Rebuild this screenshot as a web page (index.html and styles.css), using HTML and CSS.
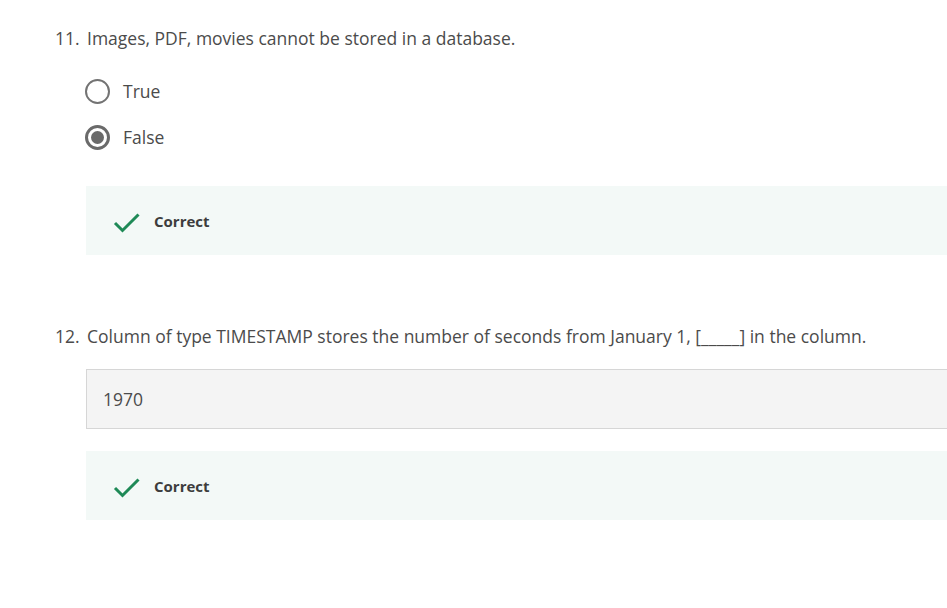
FILE: index.html
```html
<!DOCTYPE html>
<html>
<head>
<meta charset="utf-8">
<link rel="stylesheet" href="styles.css">
</head>
<body>
<div class="page">
  <section class="question q11">
    <p class="qtext"><span class="qnum">11.</span><span class="qbody">Images, PDF, movies cannot be stored in a database.</span></p>
    <ul class="options">
      <li class="option"><span class="radio"></span><span class="label">True</span></li>
      <li class="option"><span class="radio checked"></span><span class="label">False</span></li>
    </ul>
    <div class="feedback">
      <svg class="check" width="28" height="22" viewBox="0 0 28 22"><path d="M2 12 L9.5 19.5 L25.5 3.5" fill="none" stroke="#1e8a57" stroke-width="3"/></svg>
      <span class="fb-text">Correct</span>
    </div>
  </section>
  <section class="question q12">
    <p class="qtext"><span class="qnum">12.</span><span class="qbody">Column of type TIMESTAMP stores the number of seconds from January 1, [_____] in the column.</span></p>
    <div class="answer">1970</div>
    <div class="feedback">
      <svg class="check" width="28" height="22" viewBox="0 0 28 22"><path d="M2 12 L9.5 19.5 L25.5 3.5" fill="none" stroke="#1e8a57" stroke-width="3"/></svg>
      <span class="fb-text">Correct</span>
    </div>
  </section>
</div>
</body>
</html>
```
FILE: styles.css
```css
html, body {
  margin: 0;
  padding: 0;
  background: #ffffff;
}
body {
  font-family: "Open Sans", "Liberation Sans", sans-serif;
  color: #4b4b4b;
  overflow: hidden;
}
.page {
  width: 892px;
  padding-left: 55px;
  padding-top: 25px;
}
.question {
  margin: 0;
}
.qtext {
  margin: 0;
  font-size: 17.5px;
  line-height: 26px;
  display: flex;
  white-space: nowrap;
}
.qnum {
  width: 32px;
  flex: none;
}
.options {
  list-style: none;
  margin: 0;
  padding: 0 0 0 30px;
}
.q11 .options {
  margin-top: 27px;
}
.option {
  display: flex;
  align-items: center;
  height: 26px;
  margin-bottom: 20px;
}
.radio {
  box-sizing: border-box;
  width: 25px;
  height: 25px;
  border: 2px solid #737373;
  border-radius: 50%;
  margin-right: 13px;
  display: flex;
  align-items: center;
  justify-content: center;
}
.radio.checked {
  border-width: 3px;
  border-color: #6a6a6a;
}
.radio.checked::after {
  content: "";
  width: 13px;
  height: 13px;
  border-radius: 50%;
  background: #6a6a6a;
}
.label {
  font-size: 17.5px;
}
.feedback {
  margin-left: 31px;
  height: 69px;
  background: #f3f9f7;
  display: flex;
  align-items: center;
  padding-left: 27px;
}
.q11 .feedback {
  margin-top: 36px;
}
.check {
  margin-right: 13px;
  margin-top: 2px;
}
.fb-text {
  font-size: 15px;
  font-weight: 700;
  color: #3d3d3d;
}
.q12 {
  margin-top: 68px;
}
.answer {
  margin-left: 31px;
  margin-top: 20px;
  height: 58px;
  background: #f4f4f4;
  border: 1px solid #d6d6d6;
  border-right: none;
  display: flex;
  align-items: center;
  padding-left: 16px;
  font-size: 17.5px;
}
.q12 .feedback {
  margin-top: 22px;
}
```
